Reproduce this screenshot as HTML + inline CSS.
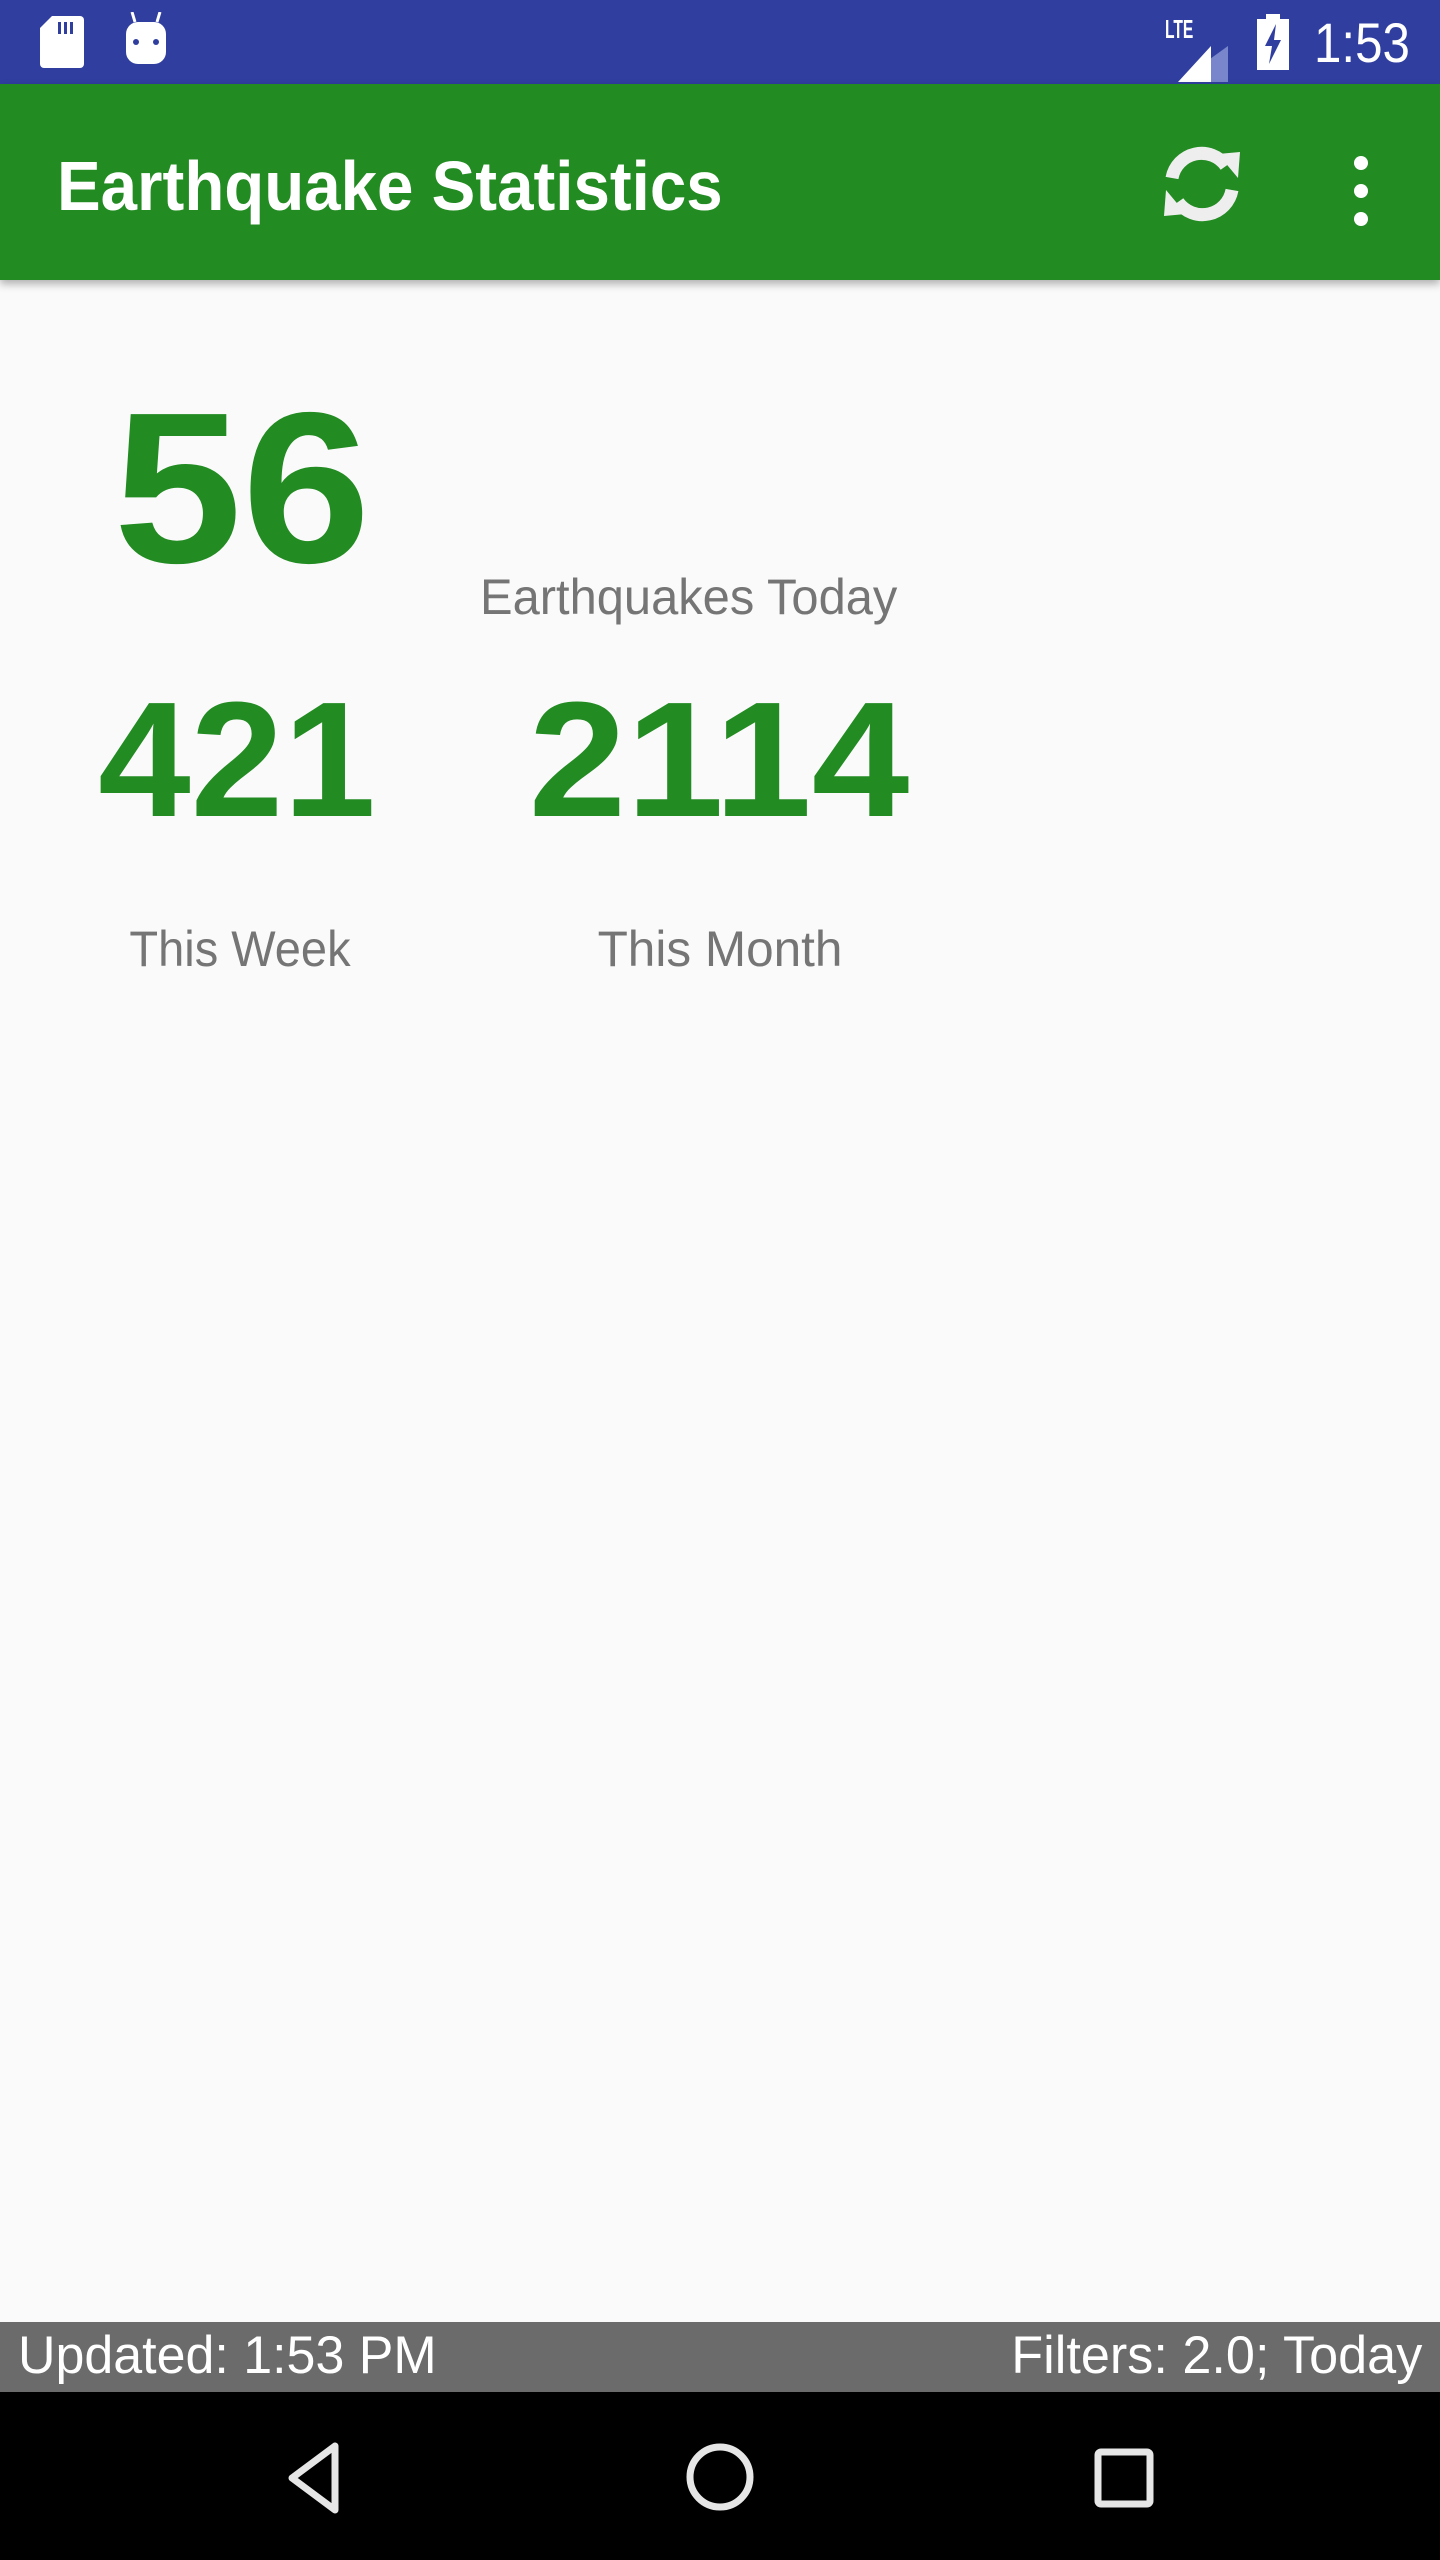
<!DOCTYPE html>
<html><head><meta charset="utf-8"><style>
*{margin:0;padding:0;box-sizing:border-box}
body{width:1440px;height:2560px;background:#fafafa;font-family:"Liberation Sans",sans-serif;position:relative;overflow:hidden}
.abs{position:absolute;white-space:nowrap}
#sb{top:0;left:0;width:1440px;height:84px;background:#303f9f}
#ab{top:84px;left:0;width:1440px;height:196px;background:#228b22;box-shadow:0 4px 8px rgba(0,0,0,.3)}
.g{color:#228b22;font-weight:bold}
.l{color:#757575}
</style></head><body>
<div id="sb" class="abs">
<svg class="abs" style="left:40px;top:16px" width="44" height="52" viewBox="0 0 44 52"><path d="M12 0H40a4 4 0 0 1 4 4V48a4 4 0 0 1-4 4H4a4 4 0 0 1-4-4V12Z" fill="#fff"/><rect x="18" y="6" width="3" height="12" fill="#303f9f"/><rect x="24" y="6" width="3" height="12" fill="#303f9f"/><rect x="30" y="6" width="3" height="12" fill="#303f9f"/></svg>
<svg class="abs" style="left:124px;top:12px" width="44" height="52" viewBox="0 0 44 52"><path d="M8 0L11 10M36 0L33 10" stroke="#fff" stroke-width="3"/><rect x="2" y="10" width="40" height="42" rx="12" fill="#fff"/><circle cx="12" cy="30" r="3" fill="#303f9f"/><circle cx="32" cy="30" r="3" fill="#303f9f"/></svg>
<div class="abs" style="left:1165px;top:14px;color:#fff;font-size:26px;font-weight:bold;transform:scaleX(.6);transform-origin:left">LTE</div>
<svg class="abs" style="left:1178px;top:46px" width="50" height="36" viewBox="0 0 50 36"><path d="M50 0V36H0Z" fill="#7986cb"/><path d="M33 0 L0 36 H33Z" fill="#fff"/></svg>
<svg class="abs" style="left:1257px;top:14px" width="32" height="56" viewBox="0 0 32 56"><rect x="9" y="0" width="14" height="6" fill="#fff"/><rect x="0" y="5" width="32" height="51" fill="#fff"/><path d="M19 10L8 32H15L12 50L24 26H17Z" fill="#303f9f"/></svg>
<div class="abs" style="left:1314px;top:10px;color:#fff;font-size:56px;transform:scaleX(.88);transform-origin:left">1:53</div>
</div>
<div id="ab" class="abs">
<div class="abs" style="left:57px;top:62px;color:#fff;font-size:70px;font-weight:bold;transform:scaleX(.935);transform-origin:left">Earthquake Statistics</div>
<svg class="abs" style="left:1158px;top:56px" width="88" height="88" viewBox="0 0 88 88"><g fill="none" stroke="#eee" stroke-width="13"><path d="M14 38A30 30 0 0 1 68 26"/><path d="M74 50A30 30 0 0 1 20 62"/></g><path d="M60 14L82 12L80 38Z" fill="#eee"/><path d="M28 74L6 76L8 50Z" fill="#eee"/></svg>
<div class="abs" style="left:1354px;top:72px;width:14px;height:14px;border-radius:7px;background:#fff"></div>
<div class="abs" style="left:1354px;top:100px;width:14px;height:14px;border-radius:7px;background:#fff"></div>
<div class="abs" style="left:1354px;top:128px;width:14px;height:14px;border-radius:7px;background:#fff"></div>
</div>
<div class="abs g" style="left:242px;top:380px;font-size:215px;line-height:1;transform:translateX(-50%) scaleX(1.075)">56</div>
<div class="abs l" style="left:480px;top:568px;font-size:50px;transform:scaleX(.977);transform-origin:left">Earthquakes Today</div>
<div class="abs g" style="left:237px;top:678px;font-size:164px;line-height:1;transform:translateX(-50%) scaleX(1.015)">421</div>
<div class="abs g" style="left:719px;top:678px;font-size:164px;line-height:1;transform:translateX(-50%) scaleX(1.07)">2114</div>
<div class="abs l" style="left:240px;top:920px;font-size:50px;transform:translateX(-50%) scaleX(.94)">This Week</div>
<div class="abs l" style="left:720px;top:920px;font-size:50px;transform:translateX(-50%) scaleX(.99)">This Month</div>
<div class="abs" style="left:0;top:2322px;width:1440px;height:70px;background:#6b6b6b"></div>
<div class="abs" style="left:18px;top:2325px;color:#fff;font-size:53px;transform:scaleX(.98);transform-origin:left">Updated: 1:53 PM</div>
<div class="abs" style="right:18px;top:2325px;color:#fff;font-size:53px;transform:scaleX(.985);transform-origin:right">Filters: 2.0; Today</div>
<div class="abs" style="left:0;top:2392px;width:1440px;height:168px;background:#000"></div>
<svg class="abs" style="left:280px;top:2440px" width="70" height="76" viewBox="0 0 70 76"><path d="M55 6V70L12 38Z" fill="none" stroke="#e6e6e6" stroke-width="7" stroke-linejoin="round"/></svg>
<svg class="abs" style="left:684px;top:2441px" width="72" height="72"><circle cx="36" cy="36" r="30" fill="none" stroke="#e6e6e6" stroke-width="7"/></svg>
<svg class="abs" style="left:1094px;top:2448px" width="60" height="60"><rect x="4" y="4" width="52" height="52" rx="3" fill="none" stroke="#e6e6e6" stroke-width="7"/></svg>
</body></html>
